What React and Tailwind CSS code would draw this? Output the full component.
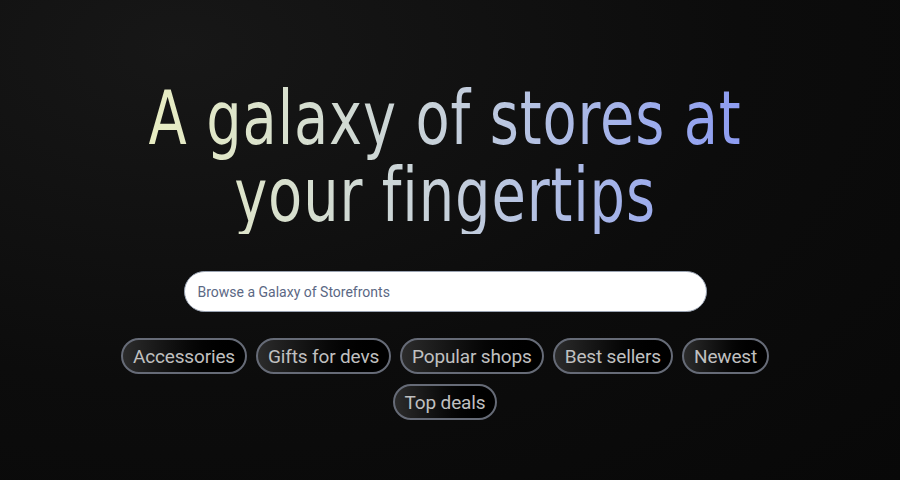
import { useState } from "react";

const TAGS = ["Accessories", "Gifts for devs", "Popular shops", "Best sellers", "Newest", "Top deals"];

export default function App() {
  const [query, setQuery] = useState("");

  return (
    <div className="min-h-[480px] w-full bg-[radial-gradient(ellipse_at_20%_10%,#171717_0%,#0c0c0c_55%,#080808_100%)] font-['Roboto',sans-serif]">
      <div className="w-[890px] flex flex-col items-center pt-[80px]">
        {/* condensed display face is not installed, so squeeze DejaVu Condensed */}
        <h1 className="w-fit scale-x-[0.84] text-center text-[74px] leading-[77px] font-normal tracking-[1px] font-['DejaVu_Sans',sans-serif] [font-stretch:condensed] bg-linear-to-r from-[#e8edc2] via-[#c6d0da] to-[#8d9cf2] bg-clip-text text-transparent">
          A galaxy of stores at
          <br />
          your fingertips
        </h1>

        <div className="mt-[37px] w-[523px]">
          <input
            value={query}
            onChange={(e) => setQuery(e.target.value)}
            placeholder="Browse a Galaxy of Storefronts"
            className="w-full h-[41px] rounded-full bg-white border border-[#9aa3b2] px-[13px] text-[14px] text-[#334155] placeholder:text-[#5b6884] outline-none"
          />
        </div>

        <div className="mt-[26px] w-[700px] flex flex-wrap justify-center gap-x-[9px] gap-y-[10px]">
          {TAGS.map((tag) => (
            <button
              key={tag}
              className="h-[36px] px-[10px] rounded-full border-2 border-[#666b77] bg-linear-to-r from-[#2c2c2c] to-black text-[19px] leading-none tracking-[-0.15px] text-[#c0c0c0]"
            >
              {tag}
            </button>
          ))}
        </div>
      </div>
    </div>
  );
}
